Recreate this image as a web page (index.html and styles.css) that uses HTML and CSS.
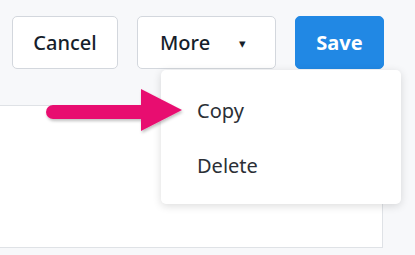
FILE: index.html
```html
<!DOCTYPE html>
<html>
<head>
<meta charset="utf-8">
<link rel="stylesheet" href="styles.css">
</head>
<body>
<div class="toolbar">
  <button class="btn">Cancel</button>
  <div class="more-wrap">
    <button class="btn btn-more"><span>More</span><span class="caret">▾</span></button>
    <div class="menu">
      <div class="menu-item">Copy</div>
      <div class="menu-item">Delete</div>
    </div>
  </div>
  <button class="btn btn-primary">Save</button>
</div>
<div class="panel"></div>
<svg class="pointer" width="200" height="60" viewBox="0 0 200 60">
  <defs>
    <filter id="sh" x="-10%" y="-30%" width="130%" height="170%">
      <feDropShadow dx="1" dy="2" stdDeviation="1.5" flood-color="#000" flood-opacity="0.25"/>
    </filter>
  </defs>
  <g filter="url(#sh)">
    <line x1="53" y1="24" x2="146" y2="24" stroke="#e80f70" stroke-width="14" stroke-linecap="round"/>
    <polygon points="141,1 182,22 141,43" fill="#e80f70"/>
  </g>
</svg>
</body>
</html>
```
FILE: styles.css
```css
html, body {
  margin: 0;
  padding: 0;
}
body {
  background: #f7f8fa;
  font-family: "Noto Sans", "Open Sans", sans-serif;
  width: 415px;
  height: 255px;
  overflow: hidden;
  position: relative;
}
.toolbar {
  display: flex;
  gap: 19px;
  padding: 16px 0 0 12px;
  height: 53px;
}
.btn {
  height: 53px;
  box-sizing: border-box;
  border: 1px solid #d3d7dd;
  border-radius: 5px;
  background: #fff;
  color: #161e2b;
  font-family: inherit;
  font-size: 20px;
  font-weight: 500;
  padding: 0;
  width: 106px;
  cursor: pointer;
}
.more-wrap {
  position: relative;
}
.btn-more {
  width: 139px;
  display: flex;
  align-items: center;
  padding-left: 22px;
}
.caret {
  font-size: 13px;
  margin-left: 29px;
}
.btn-primary {
  width: 89px;
  background: #2188e4;
  border-color: #2188e4;
  color: #fff;
  font-weight: 700;
}
.menu {
  position: absolute;
  left: 24px;
  top: 54px;
  width: 240px;
  height: 134px;
  box-sizing: border-box;
  background: #fff;
  border-radius: 5px;
  box-shadow: 0 2px 8px rgba(0,0,0,0.14);
  padding-top: 27px;
  z-index: 2;
}
.menu-item {
  padding-left: 36px;
  font-size: 20px;
  color: #2b2f36;
  height: 55px;
  line-height: 28px;
}
.panel {
  margin-top: 36px;
  width: 383px;
  height: 143px;
  box-sizing: border-box;
  background: #fff;
  border: 1px solid #dfe2e6;
  border-left: none;
}
.pointer {
  position: absolute;
  left: 0;
  top: 88px;
  z-index: 3;
}
```
